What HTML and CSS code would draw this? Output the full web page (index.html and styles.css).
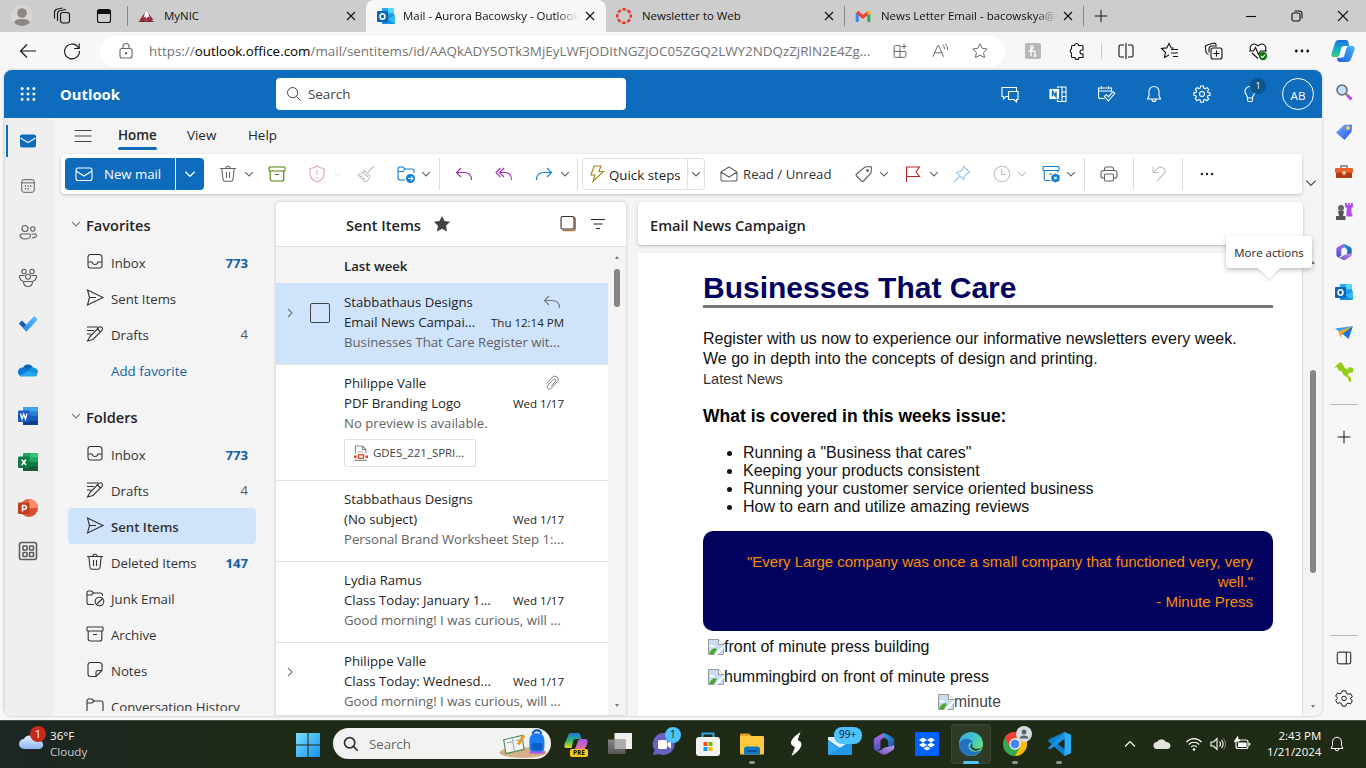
FILE: index.html
```html
<!DOCTYPE html>
<html lang="en">
<head>
<meta charset="utf-8">
<title>Mail - Aurora Bacowsky - Outlook</title>
<link rel="stylesheet" href="styles.css">
</head>
<body>
<svg class="defs" width="0" height="0">
<defs>
<linearGradient id="gBlue" x1="0" y1="0" x2="1" y2="1"><stop offset="0" stop-color="#7be0ff"/><stop offset="1" stop-color="#1490e8"/></linearGradient>
<linearGradient id="gCop1" x1="0" y1="0" x2="0" y2="1"><stop offset="0" stop-color="#1a74d8"/><stop offset=".6" stop-color="#12b5c0"/><stop offset="1" stop-color="#4bc878"/></linearGradient>
<linearGradient id="gCop2" x1="0" y1="1" x2="1" y2="0"><stop offset="0" stop-color="#1d5fe0"/><stop offset="1" stop-color="#45b6f2"/></linearGradient>
<linearGradient id="gPre1" x1="0" y1="0" x2="0" y2="1"><stop offset="0" stop-color="#1a7bdc"/><stop offset=".5" stop-color="#2bb673"/><stop offset="1" stop-color="#f2d320"/></linearGradient>
<linearGradient id="gPre2" x1="0" y1="0" x2="0" y2="1"><stop offset="0" stop-color="#a35bf0"/><stop offset="1" stop-color="#f5708c"/></linearGradient>
<linearGradient id="gM1" x1="0" y1="0" x2="0" y2="1"><stop offset="0" stop-color="#b06be0"/><stop offset="1" stop-color="#4a4ec8"/></linearGradient>
<linearGradient id="gM2" x1="0" y1="0" x2="1" y2="1"><stop offset="0" stop-color="#2f9fe6"/><stop offset="1" stop-color="#1c4fa4"/></linearGradient>
<linearGradient id="gM3" x1="0" y1="1" x2="1" y2="0"><stop offset="0" stop-color="#6c4fc0"/><stop offset="1" stop-color="#c49be8"/></linearGradient>
<linearGradient id="gEdge" x1="0" y1="0" x2="1" y2=".6"><stop offset="0" stop-color="#2ba4ea"/><stop offset=".6" stop-color="#35c1c0"/><stop offset="1" stop-color="#5ee06a"/></linearGradient>
<linearGradient id="gTodo" x1="0" y1="1" x2="1" y2="0"><stop offset="0" stop-color="#2b88e0"/><stop offset="1" stop-color="#5bc4ff"/></linearGradient>
<linearGradient id="gTag" x1="0" y1="0" x2="1" y2="1"><stop offset="0" stop-color="#74b4ff"/><stop offset="1" stop-color="#2a50e8"/></linearGradient>
<linearGradient id="gGrey" x1="0" y1="0" x2="0" y2="1"><stop offset="0" stop-color="#858585"/><stop offset="1" stop-color="#555"/></linearGradient>
<linearGradient id="gCloud" x1="0" y1="0" x2="0" y2="1"><stop offset="0" stop-color="#e6effd"/><stop offset="1" stop-color="#8fb6f2"/></linearGradient>
</defs>
<symbol id="x" viewBox="0 0 20 20"><path d="M6 6l8 8M14 6l-8 8"/></symbol>
<symbol id="chev" viewBox="0 0 10 10"><path d="M1.200 3.200L5 7l3.800-3.800"/></symbol>
<symbol id="chevr" viewBox="0 0 10 10"><path d="M3 1l4 4-4 4"/></symbol>
<symbol id="plus" viewBox="0 0 20 20"><path d="M10 3v14M3 10h14"/></symbol>
<symbol id="workspaces" viewBox="0 0 20 20"><rect x="8.500" y="6.500" width="9" height="10.500" rx="2.500"/><path d="M5.500 15V8a3.500 3.500 0 0 1 3.500-3.500l5-1M2.500 12.500V6.500A3.500 3.500 0 0 1 5.500 3l5-1"/></symbol>
<symbol id="tabact" viewBox="0 0 20 20"><rect x="3.500" y="3.500" width="13" height="13" rx="2"/><path d="M4 4.500h12v3H4z" fill="currentColor"/></symbol>
<symbol id="outlook" viewBox="0 0 18 18"><path d="M5 1h12v9H5z" fill="#28a8ea" stroke="none"/><path d="M11 1h6v5h-6z" fill="#50d9ff" stroke="none"/><path d="M4 9l14-1v9H5z" fill="#1490df" stroke="none"/><path d="M10 12l8-4v9z" fill="#35b8f1" stroke="none"/><rect x="0" y="4" width="11" height="11" rx="1" fill="#0a66b8" stroke="none"/><ellipse cx="5.500" cy="9.500" rx="2.400" ry="2.700" stroke="#fff" stroke-width="1.600"/></symbol>
<symbol id="mountain" viewBox="0 0 18 18"><path d="M2.500 13L9.500 3.500l7 9.500z" fill="#9a3040" stroke="none"/><path d="M8 5.500l1.500-2L11.500 6.500l1 4-1.500-1-1.500 2-1.500-2-1.500 1.500z" fill="#fff" stroke="none"/><path d="M1 15l3.500-2.500 4.500 1 4-1 4.500 2.500z" fill="#8d2332" stroke="none"/></symbol>
<symbol id="back" viewBox="0 0 20 20"><path d="M18 10H2.500M9 3.500L2.500 10 9 16.500"/></symbol>
<symbol id="reload" viewBox="0 0 20 20"><path d="M16.800 7.500A7.400 7.400 0 1 0 17.400 10M17.200 2.500v5h-5"/></symbol>
<symbol id="lock" viewBox="0 0 20 20"><rect x="4" y="7.500" width="12" height="9.500" rx="2"/><path d="M7 7.500V5.500a3 3 0 0 1 6 0v2"/><circle cx="10" cy="12.200" r=".7" fill="currentColor"/></symbol>
<symbol id="apps" viewBox="0 0 20 20"><path d="M10 4H5a1.500 1.500 0 0 0-1.500 1.500V16A1 1 0 0 0 4.500 17H15a1.500 1.500 0 0 0 1.500-1.500V11M10 4v13M3.500 10.500h13M14.500 2v6M11.500 5h6"/></symbol>
<symbol id="star" viewBox="0 0 20 20"><path d="M10 2l2.500 5 5.500.8-4 3.900 1 5.500-5-2.600-5 2.600 1-5.500-4-3.900 5.500-.8z"/></symbol>
<symbol id="puzzle" viewBox="0 0 20 20"><path d="M7.500 4.500a2 2 0 0 1 4 0H15a1 1 0 0 1 1 1V9h-1a2 2 0 0 0 0 4h1v3.500h-4a2 2 0 0 1-4 0H5.500a1 1 0 0 1-1-1V12a2.200 2.200 0 0 1 0-4V5.500a1 1 0 0 1 1-1z"/></symbol>
<symbol id="split" viewBox="0 0 20 20"><path d="M8 4H4.500A1.500 1.500 0 0 0 3 5.500v9A1.500 1.500 0 0 0 4.500 16H8M12 4h3.500A1.500 1.500 0 0 1 17 5.500v9a1.500 1.500 0 0 1-1.500 1.500H12M10 2v16"/></symbol>
<symbol id="starlist" viewBox="0 0 20 20"><path d="M9 14l-4.500 2.500 1-5-4-4 5.300-.6L9 2.500l2.300 4.400 2.200.2M11 8.500h7M11 12h7M13 15.500h5"/></symbol>
<symbol id="collections" viewBox="0 0 20 20"><path d="M4.500 13.500C2.500 13 2.500 12.500 2 11L1.300 6.500c-.2-1.300.5-2.200 1.700-2.500l6.500-1.800c1.300-.3 2.300.3 2.700 1.800"/><path d="M5 11.500V8a3 3 0 0 1 3-3h5"/><rect x="7" y="7" width="11" height="11" rx="2"/><path d="M12.500 9.500v6M9.500 12.500h6"/></symbol>
<symbol id="heart" viewBox="0 0 20 20"><path d="M2.800 9.500C.5 5 5.500.5 10 4.800c4.500-4.300 9.500.2 7.200 4.700M4 12l6 5.500M1 10h4.500L7.500 6.500l3 7 2-3.500H19"/><circle cx="15" cy="15" r="4.200" fill="#107c10" stroke="none"/><path d="M13 15l1.500 1.500 2.700-2.900" stroke="#fff"/></symbol>
<symbol id="dots" viewBox="0 0 20 20"><g fill="currentColor" stroke="none"><circle cx="4.300" cy="10" r="1.400"/><circle cx="10" cy="10" r="1.400"/><circle cx="15.700" cy="10" r="1.400"/></g></symbol>
<symbol id="copilot" viewBox="0 0 24 24"><g stroke="none"><path d="M8 1h7c2 0 2 1 2.500 3l.8 3H13c-2 0-2.500 1-3 3l-1.500 6C8 18 7 18 5 18H3c-3 0-3-2-2-5L4 4c.7-2 1.500-3 4-3z" fill="url(#gCop1)"/><path d="M16 23H9c-2 0-2.500-1-3-4l5-.5c1.500 0 2-.8 2.500-2.500l1.700-6c.6-2 1.500-3 3.300-3H21c3 0 3 2 2 5l-3 8c-.8 2-1.700 3-4 3z" fill="url(#gCop2)"/></g></symbol>
<symbol id="waffle" viewBox="0 0 20 20"><g fill="currentColor" stroke="none"><rect x="2" y="2.500" width="3" height="3" rx="1"/><rect x="8.500" y="2.500" width="3" height="3" rx="1"/><rect x="15" y="2.500" width="3" height="3" rx="1"/><rect x="2" y="8.500" width="3" height="3" rx="1"/><rect x="8.500" y="8.500" width="3" height="3" rx="1"/><rect x="15" y="8.500" width="3" height="3" rx="1"/><rect x="2" y="14.500" width="3" height="3" rx="1"/><rect x="8.500" y="14.500" width="3" height="3" rx="1"/><rect x="15" y="14.500" width="3" height="3" rx="1"/></g></symbol>
<symbol id="search" viewBox="0 0 20 20"><circle cx="8.500" cy="8.500" r="5.700"/><path d="M12.700 12.700L17.500 17.500"/></symbol>
<symbol id="chat" viewBox="0 0 20 20"><path d="M8 12.500H6l-2.500 2.500v-2.500H2v-9h14.500v3.500"/><path d="M8.500 7.500H18v8h-1.500V18L14 15.500H8.500z"/></symbol>
<symbol id="onenote" viewBox="0 0 20 20"><path d="M9.500 4V3h8.500v14.500H9.500v-2M14 3v14.500M14 8h4M14 12.500h4"/><rect x="2" y="5.500" width="8.500" height="9" fill="currentColor"/><path d="M4.500 12.500v-5l3.500 5v-5" stroke="#0f6cbd" stroke-width="1.500"/></symbol>
<symbol id="calcheck" viewBox="0 0 20 20"><path d="M8.500 14.500H4.500a2 2 0 0 1-2-2V4h13v4M2.500 7h13M5.500 2v3M12.500 2v3"/><path d="M8.500 12.500l1.800-1.800 2.200 2 4.500-5 1.800 1.700-6.500 7.600z"/></symbol>
<symbol id="bell" viewBox="0 0 20 20"><path d="M10 2.500a5 5 0 0 0-5 5v4L3.500 15h13L15 11.500v-4a5 5 0 0 0-5-5zM8 15.500a2 2 0 0 0 4 0"/></symbol>
<symbol id="gear" viewBox="0 0 20 20"><path d="M8.600 2h2.800l.4 2.200 1.300.6L15 3.600 16.800 5.500l-1.300 1.800.5 1.300 2 .3v2.500l-2 .4-.6 1.300 1.300 1.800-1.900 1.800-1.700-1.200-1.400.5-.3 2.300H8.600l-.4-2.200-1.400-.6L5 16.700 3.200 14.800l1.200-1.700-.5-1.400-2-.4V8.800l2.100-.4.500-1.300L3.300 5.300l1.900-1.800 1.700 1.200 1.300-.5z"/><circle cx="10" cy="10" r="2.500"/></symbol>
<symbol id="bulb" viewBox="0 0 20 20"><path d="M10 2.500a5 5 0 0 0-5 5c0 2.500 2 3.500 2.500 6V16a1.500 1.500 0 0 0 1.500 1.500h2A1.500 1.500 0 0 0 12.500 16v-2.500c.5-2.500 2.500-3.500 2.500-6M7.500 14h5"/></symbol>
<symbol id="mailf" viewBox="0 0 20 20"><rect x="2" y="3.500" width="16" height="13" rx="2" fill="#0f6cbd" stroke="none"/><path d="M2.500 7L10 11.500 17.500 7" stroke="#efefef" stroke-width="1.300"/></symbol>
<symbol id="mail" viewBox="0 0 20 20"><rect x="2" y="4" width="16" height="12.500" rx="2"/><path d="M2 7l8 5 8-5"/></symbol>
<symbol id="cal" viewBox="0 0 20 20"><rect x="3" y="3" width="14" height="14" rx="2.500"/><path d="M3 6.500h14"/><path d="M6.500 10h1.400M9.300 10h1.400M12.200 10h1.400M6.500 13h1.400M9.300 13h1.400" stroke-width="1.700"/></symbol>
<symbol id="people" viewBox="0 0 20 20"><circle cx="7" cy="6.500" r="3"/><circle cx="14.800" cy="7" r="2.200"/><path d="M3 12h8.500c.8 0 1 .7 1 1.500 0 2-2.500 3.500-5.300 3.500S2 15.500 2 13.500C2 12.700 2.300 12 3 12zM13.500 12h4c.7 0 1 .5 1 1.200 0 1.800-2 2.800-4.500 2.500"/></symbol>
<symbol id="group" viewBox="0 0 20 20"><circle cx="6" cy="3.500" r="2.200"/><circle cx="14" cy="3.500" r="2.200"/><circle cx="10" cy="8.800" r="2.500"/><path d="M5.500 13.500h9c0 3-1.500 5-4.500 5s-4.500-2-4.500-5zM6.500 7.500H1.500c0 3 .5 5 3.500 5.500M13.500 7.500h5c0 3-.5 5-3.500 5.500"/></symbol>
<symbol id="todo" viewBox="0 0 20 20"><g stroke="none"><path d="M.8 9.500L4 6.500l5 5-3 3.300z" fill="#185abd"/><path d="M5 14L15.500 2.800c.5-.6 1-.5 1.500 0l2 2c.6.6.5 1 0 1.600L9 17c-.5.500-1 .5-1.500 0z" fill="url(#gTodo)"/></g></symbol>
<symbol id="onedrive" viewBox="0 0 20 20"><g stroke="none"><path d="M5 8a5.500 5.500 0 0 1 10-.5l-6 4z" fill="#0364b8"/><path d="M5 7.500c2-.5 4 .5 8 4l-9 5A4.500 4.500 0 0 1 5 7.500z" fill="#0f78d4"/><path d="M14.500 7.500c3 0 5.500 2 5.500 4.500l-2 4-8-5c1-2 2-3.500 4.500-3.500z" fill="#1490df"/><path d="M10 11l9.500 3.500c-.5 1.200-1.500 2-3 2H4.500c-1.300 0-2.200-.4-3-1z" fill="#28a8ea"/></g></symbol>
<symbol id="word" viewBox="0 0 20 20"><g stroke="none"><rect x="5" y="1" width="15" height="18" rx="1" fill="#2b7cd3"/><path d="M5 1h15v4.500H5z" fill="#41a5ee"/><path d="M5 10h15v4.500H5z" fill="#185abd"/><path d="M5 14.500h15V19H5z" fill="#103f91"/><rect x="0" y="4.500" width="11.500" height="11.500" rx="1" fill="#185abd"/></g><path d="M2.500 7.500l1.500 5.500 1.700-5L7.500 13 9 7.500" stroke="#fff" stroke-width="1.300"/></symbol>
<symbol id="excel" viewBox="0 0 20 20"><g stroke="none"><rect x="5" y="1" width="15" height="18" rx="1" fill="#21a366"/><path d="M12 1h8v4.500h-8z" fill="#33c481"/><path d="M5 10h15v9H5z" fill="#185c37"/><path d="M12 10h8v4.500h-8z" fill="#107c41"/><rect x="0" y="4.500" width="11.500" height="11.500" rx="1" fill="#107c41"/></g><path d="M3.700 7.500L8 13M8 7.500L3.700 13" stroke="#fff" stroke-width="1.500"/></symbol>
<symbol id="ppt" viewBox="0 0 20 20"><g stroke="none"><circle cx="11" cy="10" r="9" fill="#d35230"/><path d="M11 1a9 9 0 0 1 9 9h-9z" fill="#ff8f6b"/><path d="M11 1a9 9 0 0 0-9 9h9z" fill="#ed6c47"/><rect x="0" y="4.500" width="11.500" height="11.500" rx="1" fill="#c43e1c"/></g><path d="M4.500 13.500v-6H6.500a1.800 1.800 0 0 1 0 3.800h-2" stroke="#fff" stroke-width="1.500"/></symbol>
<symbol id="moreapps" viewBox="0 0 20 20"><rect x="1.500" y="1.500" width="17" height="17" rx="2"/><rect x="5" y="5" width="4" height="4" rx=".5"/><rect x="11.500" y="5" width="4" height="4" rx=".5"/><rect x="5" y="11.500" width="4" height="4" rx=".5"/><rect x="11.500" y="11.500" width="4" height="4" rx=".5"/></symbol>
<symbol id="trash" viewBox="0 0 20 20"><path d="M2 4.500h16M7.800 4.500a2.200 2.200 0 0 1 4.400 0M3.800 4.500L5 15.500a2 2 0 0 0 2 1.800h6a2 2 0 0 0 2-1.800l1.200-11M8.500 8v6M11.500 8v6"/></symbol>
<symbol id="archive" viewBox="0 0 20 20"><rect x="2" y="3" width="16" height="4" rx=".8"/><path d="M3.200 7v8a2 2 0 0 0 2 2h9.600a2 2 0 0 0 2-2V7M8 10.500h4"/></symbol>
<symbol id="shield" viewBox="0 0 20 20"><path d="M10 2c2 1.500 4 2.300 7 2.500V10c0 4-3 6.500-7 8-4-1.500-7-4-7-8V4.500C6 4.300 8 3.500 10 2zM10 6v5M10 13v1.300"/></symbol>
<symbol id="broom" viewBox="0 0 20 20"><path d="M18 2l-6 6M8.500 6.500l5.200 5.200c-.2 3-1.700 5.300-4.700 6L2 10.500c2.500-.5 5-1.500 6.500-4zM7 8.200l4.800 4.800M4.500 13.200l2-1.700M7 15.700l2-2"/></symbol>
<symbol id="movefold" viewBox="0 0 20 20"><path d="M9 16H4a2 2 0 0 1-2-2V4.500A1.500 1.500 0 0 1 3.500 3h3.500l2 2h7a2 2 0 0 1 2 2v2M2 7.500h5L9 5"/><circle cx="14.500" cy="14.500" r="4.500" fill="#0f7fd8" stroke="none"/><path d="M12 14.500h5M15 12.500l2 2-2 2" stroke="#fff"/></symbol>
<symbol id="reply" viewBox="0 0 20 20"><path d="M7 4L2.500 8.500 7 13M2.500 8.500H10c5 0 7.500 2.500 7.500 7.500"/></symbol>
<symbol id="replyall" viewBox="0 0 20 20"><path d="M10 4L5.500 8.500 10 13M6.500 4L2 8.500 6.500 13M5.500 8.500H11c4.500 0 6.500 2.500 6.500 7.500"/></symbol>
<symbol id="bolt" viewBox="0 0 20 20"><path d="M7 2h7l-2 5.500h4.500L6 17.500l2-6.500H4z"/></symbol>
<symbol id="openmail" viewBox="0 0 20 20"><path d="M2 8l8-5 8 5v7a2 2 0 0 1-2 2H4a2 2 0 0 1-2-2zM2 8l8 5 8-5"/></symbol>
<symbol id="tag" viewBox="0 0 20 20"><path d="M11 3l5.500-.5c.6 0 1 .4 1 1L17 9l-7.500 8c-.6.600-1.400.600-2 0l-5-5c-.6-.6-.6-1.400 0-2z"/><circle cx="13.500" cy="6.500" r=".9"/></symbol>
<symbol id="flag" viewBox="0 0 20 20"><path d="M3.500 18V3H16.500l-3.500 4.800 3.500 4.700h-13"/></symbol>
<symbol id="pin" viewBox="0 0 20 20"><path d="M12 2.500l5.500 5.500-4.500 2.500-1.500 5-7-7 5-1.500zM7.500 12.500L2.500 17.500"/></symbol>
<symbol id="clock" viewBox="0 0 20 20"><circle cx="10" cy="10" r="7.800"/><path d="M9.500 5v5.500h4"/></symbol>
<symbol id="archgear" viewBox="0 0 20 20"><rect x="2" y="2.500" width="16" height="4" rx=".8"/><path d="M3.200 6.500v8a2 2 0 0 0 2 2H9M16.800 6.500v2M8 10h3"/><circle cx="14.500" cy="14" r="3" stroke-width="2.200"/><path d="M14.500 9.500v9M10.500 11.800l8 4.500M10.500 16.300l8-4.500" stroke-width="1.400"/><circle cx="14.500" cy="14" r="1.300" fill="#fff" stroke="none"/></symbol>
<symbol id="print" viewBox="0 0 20 20"><path d="M5.500 14H4a2 2 0 0 1-2-2V8.500a2 2 0 0 1 2-2h12a2 2 0 0 1 2 2V12a2 2 0 0 1-2 2h-1.500M5.500 6.500V5a2 2 0 0 1 2-2h5a2 2 0 0 1 2 2v1.500"/><rect x="5.500" y="10" width="9" height="7" rx="1.500"/></symbol>
<symbol id="undo" viewBox="0 0 20 20"><path d="M4 2.500v6h6M4 8.500l4.500-4c4-3.500 10 1 6.500 5.500L8 17"/></symbol>
<symbol id="inbox" viewBox="0 0 20 20"><rect x="3" y="2.500" width="14" height="13.500" rx="2.500"/><path d="M3 10h4c.3 1.500 1.300 2.500 3 2.500s2.700-1 3-2.500h4"/></symbol>
<symbol id="send" viewBox="0 0 20 20"><path d="M2.500 2L18 9.500 2.500 17l2-7.500zM4.500 9.500H11"/></symbol>
<symbol id="draft" viewBox="0 0 20 20"><path d="M2 3h11M2 6.500h7M2 10h4M5 12.500L14 3.300c2.300-1.500 4.500 1 3 3L8 15.500l-5.500 1.500zM12.500 5l3 3"/></symbol>
<symbol id="junk" viewBox="0 0 20 20"><path d="M9 16.500H4a2 2 0 0 1-2-2V4.500A1.500 1.500 0 0 1 3.500 3h3l2 2h7a2 2 0 0 1 2 2v1M2 7h4.500l2-2"/><circle cx="14.500" cy="13.500" r="4.300"/><path d="M11.500 16.500l6-6"/></symbol>
<symbol id="note" viewBox="0 0 20 20"><path d="M5.500 2.500h9A2.500 2.500 0 0 1 17 5v5.500l-6 6H5.500A2.500 2.500 0 0 1 3 14V5a2.500 2.500 0 0 1 2.500-2.500zM17 10.500h-4a2 2 0 0 0-2 2v4"/></symbol>
<symbol id="folder" viewBox="0 0 20 20"><path d="M2 15V5a2 2 0 0 1 2-2h3l2 2h7a2 2 0 0 1 2 2v8a2 2 0 0 1-2 2H4a2 2 0 0 1-2-2zM2 7h5l2-2"/></symbol>
<symbol id="clip" viewBox="0 0 20 20"><path d="M4 10.500l6.500-7c3-3 8.500 1 5.500 5l-7 7.500c-2.500 2-5.500-1-3.500-3.500l6-6.500c1.500-1.300 3.500.5 2.200 2.200L9 13.500"/></symbol>
<symbol id="filter" viewBox="0 0 20 20"><path d="M3 5.500h14M5.500 10h9M8 14.500h4"/></symbol>
<symbol id="m365" viewBox="0 0 20 20"><g stroke="none"><path d="M9 1L3 4.500C2 5 1.500 6 1.500 7v6c0 1.500 1 2.500 2.500 3l3-2V8c0-1.500 1-2 2-2.500l3-2C11 2 10 1 9 1z" fill="url(#gM1)"/><path d="M9.500 1c2 0 6 2.500 7.500 3.500 1 .6 1.500 1.500 1.500 2.500v6l-5 1V8c0-1.500-3-3-4-4z" fill="url(#gM2)"/><path d="M18.500 11v2c0 1-.5 1.800-1.300 2.300l-5 3c-1.400.800-2.800.8-4.200 0L4 16c3 0 4-1.500 6-2.800 1.500-1 4-.5 8.500-2.200z" fill="url(#gM3)"/></g></symbol>
<symbol id="brk" viewBox="0 0 16 16"><path d="M.5.500h10l5 5v10H.5z" fill="#c9dcf5" stroke="#9a9a9a"/><path d="M10.500.5v5h5" fill="#fff" stroke="#9a9a9a"/><path d="M2 7.500c0-1.500 2-2 2.700-.8 1.300-.5 2.500.3 2.300 1.300H2z" fill="#fff" stroke="none"/><path d="M1 15c2-5 5-7 8-5l-3 5z" fill="#4ba82e" stroke="none"/><path d="M6 16L16 6v3l-7 7z" fill="#fff" stroke="none"/></symbol>
</svg>

<header class="tabs">
  <span class="slot c44"><svg class="avatar" viewBox="0 0 22 22"><circle cx="11" cy="11" r="11" fill="#d9d6d1"/><circle cx="11" cy="8" r="4.800" fill="#8b8784"/><path d="M3 17.500c1.500-3 4-3.500 8-3.500s6.500.5 8 3.500a11 11 0 0 1-16 0z" fill="#8b8784"/></svg></span>
  <span class="slot c36"><svg class="i s20"><use href="#workspaces"/></svg></span>
  <span class="slot c48"><svg class="i s20"><use href="#tabact"/></svg></span>
  <span class="tabline"></span>
  <div class="tab t1"><svg class="i s18"><use href="#mountain"/></svg><span class="title">MyNIC</span><svg class="i s20"><use href="#x"/></svg></div>
  <div class="tab t2"><svg class="i s18"><use href="#outlook"/></svg><span class="title fade">Mail - Aurora Bacowsky - Outlook</span><svg class="i s20"><use href="#x"/></svg></div>
  <div class="tab t3"><svg class="i s18" viewBox="0 0 18 18"><circle cx="9" cy="9" r="6.700" stroke="#e23b30" stroke-width="2.500" stroke-dasharray="3.600 1.660" stroke-dashoffset="1.800"/></svg><span class="title">Newsletter to Web</span><svg class="i s20"><use href="#x"/></svg></div>
  <span class="tabline"></span>
  <div class="tab t4"><svg class="i s18" viewBox="0 0 18 18"><path d="M3.200 15V6" stroke="#4285f4" stroke-width="3"/><path d="M14.800 15V6" stroke="#34a853" stroke-width="3"/><path d="M3 5l6 5 6-5" stroke="#ea4335" stroke-width="3"/><path d="M14.800 7.500V4" stroke="#fbbc04" stroke-width="3"/></svg><span class="title fade">News Letter Email - bacowskya@</span><svg class="i s20"><use href="#x"/></svg></div>
  <span class="tabline"></span>
  <span class="slot c36"><svg class="i s18"><use href="#plus"/></svg></span>
  <div class="winctl">
    <span><svg class="i s12" viewBox="0 0 12 12"><path d="M1 6.500h10"/></svg></span>
    <span><svg class="i s12" viewBox="0 0 12 12"><rect x="1" y="3" width="8" height="8" rx="1.500"/><path d="M3.500 1h5A2.500 2.500 0 0 1 11 3.500v5"/></svg></span>
    <span><svg class="i s12" viewBox="0 0 12 12"><path d="M1 1l10 10M11 1L1 11"/></svg></span>
  </div>
</header>

<div class="toolbar">
  <span class="slot c56"><svg class="i s20"><use href="#back"/></svg></span>
  <span class="slot c32"><svg class="i s20"><use href="#reload"/></svg></span>
  <div class="address">
    <svg class="i s20 grey"><use href="#lock"/></svg>
    <span class="url">https://<b>outlook.office.com</b>/mail/sentitems/id/AAQkADY5OTk3MjEyLWFjODItNGZjOC05ZGQ2LWY2NDQzZjRlN2E4Zg...</span>
    <span class="addricons"><svg class="i s18"><use href="#apps"/></svg><svg class="i s18" viewBox="0 0 20 20"><path d="M2 16.500L7.500 4h1L14 16.500M4 12h8M13 3a6 6 0 0 1 2 5M16 2a9 9 0 0 1 2.500 7"/></svg><svg class="i s18"><use href="#star"/></svg></span>
  </div>
  <div class="exts">
    <span class="slot c44"><span class="honey"><svg class="i s16" viewBox="0 0 16 16"><path d="M6 2.500v10.500M3.500 8.500C5.500 7.500 8 6 8 4.200S6 2 6 4M6 9c4-3 5 0 3.500 4.200l2-.7" stroke="#fff" stroke-width="1.300"/></svg></span></span>
    <span class="slot c44"><svg class="i s20"><use href="#puzzle"/></svg></span>
    <span class="extline"></span>
    <span class="slot c46"><svg class="i s20"><use href="#split"/></svg></span>
    <span class="slot c44"><svg class="i s20"><use href="#starlist"/></svg></span>
    <span class="slot c44"><svg class="i s20"><use href="#collections"/></svg></span>
    <span class="slot c44"><svg class="i s20"><use href="#heart"/></svg></span>
    <span class="slot c44"><svg class="i s20"><use href="#dots"/></svg></span>
    <span class="slot c42"><svg class="i s24"><use href="#copilot"/></svg></span>
  </div>
</div>

<div class="middle">
<div class="app">
  <div class="suite">
    <span class="slot c48"><svg class="i s18"><use href="#waffle"/></svg></span>
    <span class="brand">Outlook</span>
    <div class="suitesearch"><svg class="i s18"><use href="#search"/></svg><span>Search</span></div>
    <div class="suiteicons">
      <span><svg class="i s20"><use href="#chat"/></svg></span>
      <span><svg class="i s20"><use href="#onenote"/></svg></span>
      <span><svg class="i s20"><use href="#calcheck"/></svg></span>
      <span><svg class="i s20"><use href="#bell"/></svg></span>
      <span><svg class="i s20"><use href="#gear"/></svg></span>
      <span class="bulbslot"><svg class="i s20"><use href="#bulb"/></svg><em class="tip">1</em></span>
      <span><em class="initials">AB</em></span>
    </div>
  </div>
  <div class="appbody">
    <nav class="rail">
      <span class="on"><svg class="i s20"><use href="#mailf"/></svg></span>
      <span><svg class="i s18"><use href="#cal"/></svg></span>
      <span><svg class="i s20"><use href="#people"/></svg></span>
      <span><svg class="i s20"><use href="#group"/></svg></span>
      <span><svg class="i s20"><use href="#todo"/></svg></span>
      <span><svg class="i s20"><use href="#onedrive"/></svg></span>
      <span><svg class="i s20"><use href="#word"/></svg></span>
      <span><svg class="i s20"><use href="#excel"/></svg></span>
      <span><svg class="i s20"><use href="#ppt"/></svg></span>
      <span class="last"><svg class="i s20 bold"><use href="#moreapps"/></svg></span>
    </nav>
    <div class="content">
      <div class="menus"><svg class="i s18 burger" viewBox="0 0 18 18"><path d="M.5 3.500h17M.5 9h17M.5 14.500h17"/></svg><span class="m1">Home</span><span class="m2">View</span><span class="m3">Help</span></div>
      <div class="ribbonrow">
        <div class="ribbon">
          <div class="newmail"><svg class="i s20"><use href="#mail"/></svg><span>New mail</span></div>
          <div class="newdrop"><svg class="i s12"><use href="#chev"/></svg></div>
          <svg class="i s20 g14"><use href="#trash"/></svg><svg class="i s10 g6"><use href="#chev"/></svg>
          <svg class="i s20 g13 green"><use href="#archive"/></svg>
          <svg class="i s20 g20 pink"><use href="#shield"/></svg><svg class="i s10 g6 faint"><use href="#chev"/></svg>
          <svg class="i s20 g13 off"><use href="#broom"/></svg>
          <svg class="i s20 g20 blue"><use href="#movefold"/></svg><svg class="i s10 g5"><use href="#chev"/></svg>
          <i class="div g8"></i>
          <svg class="i s20 g14 purple"><use href="#reply"/></svg>
          <svg class="i s20 g20 purple"><use href="#replyall"/></svg>
          <svg class="i s20 g20 blue flip"><use href="#reply"/></svg><svg class="i s10 g6"><use href="#chev"/></svg>
          <i class="div g7"></i>
          <div class="quick g4"><svg class="i s20 gold"><use href="#bolt"/></svg><span>Quick steps</span><b><svg class="i s10"><use href="#chev"/></svg></b></div>
          <svg class="i s20 g14"><use href="#openmail"/></svg><span class="ru g4">Read / Unread</span>
          <svg class="i s20 g21"><use href="#tag"/></svg><svg class="i s10 g5"><use href="#chev"/></svg>
          <svg class="i s20 g14 red"><use href="#flag"/></svg><svg class="i s10 g6"><use href="#chev"/></svg>
          <svg class="i s20 g13 sky"><use href="#pin"/></svg>
          <svg class="i s20 g20 off"><use href="#clock"/></svg><svg class="i s10 g5 off"><use href="#chev"/></svg>
          <svg class="i s20 g14 blue"><use href="#archgear"/></svg><svg class="i s10 g5"><use href="#chev"/></svg>
          <i class="div g8"></i>
          <svg class="i s20 g14"><use href="#print"/></svg>
          <i class="div g14"></i>
          <svg class="i s20 g15 off"><use href="#undo"/></svg>
          <i class="div g13"></i>
          <svg class="i s18 g15 dark"><use href="#dots"/></svg>
        </div>
        <svg class="i s12 collapse"><use href="#chev"/></svg>
      </div>
      <div class="panes">
        <div class="folders">
          <div class="fhead"><svg class="i s10"><use href="#chev"/></svg><span>Favorites</span></div>
          <div class="f"><svg class="i s20"><use href="#inbox"/></svg><span>Inbox</span><b>773</b></div>
          <div class="f"><svg class="i s20"><use href="#send"/></svg><span>Sent Items</span></div>
          <div class="f"><svg class="i s20"><use href="#draft"/></svg><span>Drafts</span><i>4</i></div>
          <div class="f add"><span>Add favorite</span></div>
          <div class="fhead second"><svg class="i s10"><use href="#chev"/></svg><span>Folders</span></div>
          <div class="f"><svg class="i s20"><use href="#inbox"/></svg><span>Inbox</span><b>773</b></div>
          <div class="f"><svg class="i s20"><use href="#draft"/></svg><span>Drafts</span><i>4</i></div>
          <div class="f sel"><svg class="i s20"><use href="#send"/></svg><span>Sent Items</span></div>
          <div class="f"><svg class="i s20"><use href="#trash"/></svg><span>Deleted Items</span><b>147</b></div>
          <div class="f"><svg class="i s20"><use href="#junk"/></svg><span>Junk Email</span></div>
          <div class="f"><svg class="i s20"><use href="#archive"/></svg><span>Archive</span></div>
          <div class="f"><svg class="i s20"><use href="#note"/></svg><span>Notes</span></div>
          <div class="f"><svg class="i s20"><use href="#folder"/></svg><span class="conv">Conversation History</span></div>
        </div>
        <div class="list">
          <div class="listhead"><span class="lt">Sent Items</span><svg class="s18 solidstar" viewBox="0 0 20 20"><path d="M10 1l2.800 5.700 6.200.9-4.500 4.400 1.100 6.200-5.600-2.900-5.600 2.900 1.100-6.200L1 7.600l6.200-.9z"/></svg><svg class="i s18 sel-icon" viewBox="0 0 18 18"><path d="M15 2.500l1.200 1V13a2.500 2.500 0 0 1-2.500 2.500H5L3.500 14.500" stroke="#b87340" stroke-width="1.500"/><rect x="2" y="1.500" width="13" height="12.500" rx="1.500" stroke="#333"/></svg><svg class="i s20 dark filt"><use href="#filter"/></svg></div>
          <div class="listbody">
            <div class="msgs">
              <div class="week">Last week</div>
              <div class="msg cur">
                <svg class="i s10"><use href="#chevr"/></svg><i class="box"></i>
                <div class="mtext"><p><span>Stabbathaus Designs</span><svg class="i s20"><use href="#reply"/></svg></p><p><span>Email News Campai...</span><time>Thu 12:14 PM</time></p><p class="pre">Businesses That Care Register wit...</p></div>
              </div>
              <div class="msg tall">
                <div class="mtext"><p><span>Philippe Valle</span><svg class="i s18"><use href="#clip"/></svg></p><p><span>PDF Branding Logo</span><time>Wed 1/17</time></p><p class="pre">No preview is available.</p><div class="att"><svg class="i s16" viewBox="0 0 16 16"><path d="M2.500 8.500V1h7L13 4.500v4M9.500 1v3.500H13M2.500 14v1.500H13V14" stroke="#8a8a8a"/><path d="M4.500 7h6" stroke="#bbb"/><rect x="5.500" y="9.800" width="5" height="3.700" stroke="#d24726" stroke-width="1.300"/><path d="M1 10.500h2.500v2.500H1zM12.500 10.500H15v2.500h-2.500z" fill="#d24726" stroke="none"/></svg><span>GDES_221_SPRI...</span></div></div>
              </div>
              <div class="msg"><div class="mtext"><p><span>Stabbathaus Designs</span></p><p><span>(No subject)</span><time>Wed 1/17</time></p><p class="pre">Personal Brand Worksheet Step 1:...</p></div></div>
              <div class="msg"><div class="mtext"><p><span>Lydia Ramus</span></p><p><span>Class Today: January 1...</span><time>Wed 1/17</time></p><p class="pre">Good morning! I was curious, will ...</p></div></div>
              <div class="msg"><svg class="i s10"><use href="#chevr"/></svg><div class="mtext"><p><span>Philippe Valle</span></p><p><span>Class Today: Wednesd...</span><time>Wed 1/17</time></p><p class="pre">Good morning! I was curious, will ...</p></div></div>
            </div>
            <div class="scroll"><i class="up"></i><i class="thumb"></i><i class="down"></i></div>
          </div>
        </div>
        <div class="reading">
          <div class="subject">Email News Campaign</div>
          <div class="bodyrow">
            <article class="mailbody">
              <h1>Businesses That Care</h1>
              <p class="lead">Register with us now to experience our informative newsletters every week.<br>We go in depth into the concepts of design and printing.</p>
              <p class="latest">Latest News</p>
              <h2>What is covered in this weeks issue:</h2>
              <ul><li>Running a "Business that cares"</li><li>Keeping your products consistent</li><li>Running your customer service oriented business</li><li>How to earn and utilize amazing reviews</li></ul>
              <blockquote>"Every Large company was once a small company that functioned very, very<br>well."<br>- Minute Press</blockquote>
              <div class="alt a1"><svg class="s16"><use href="#brk"/></svg><span>front of minute press building</span></div>
              <div class="alt a2"><svg class="s16"><use href="#brk"/></svg><span>hummingbird on front of minute press</span></div>
              <div class="alt a3"><svg class="s16"><use href="#brk"/></svg><span>minute</span></div>
            </article>
            <div class="scroll rs"><i class="up"></i><i class="thumb"></i><i class="down"></i></div>
          </div>
          <div class="tooltip">More actions</div>
        </div>
      </div>
    </div>
  </div>
</div>
<aside class="edge">
  <span><svg class="i s18" viewBox="0 0 18 18"><circle cx="7" cy="7" r="5" fill="#bfe0f8" stroke="#666" stroke-width="1.500"/><path d="M11 11l2 2" stroke="#777" stroke-width="2"/><path d="M12.500 12.500l4 4" stroke="#b845e8" stroke-width="3"/></svg></span>
  <span><svg class="s18" viewBox="0 0 18 18"><path d="M9 2l7-.5c.8 0 1 .4 1 1L16.500 9l-7 8L1 9.500z" fill="url(#gTag)"/><circle cx="13" cy="5" r="2" fill="#f8d64a"/></svg></span>
  <span><svg class="s18" viewBox="0 0 18 18"><path d="M6 5V3h6v2" fill="none" stroke="#7a7a7a" stroke-width="1.500"/><rect x="0" y="5" width="18" height="5" rx="1" fill="#e8622c"/><path d="M1 9.500h16V15H1z" fill="#b83c12"/><rect x="7.500" y="8.500" width="3" height="3" fill="#f0e0d0"/></svg></span>
  <span><svg class="s18" viewBox="0 0 18 18"><circle cx="6" cy="5" r="3" fill="#666"/><path d="M3 8h6l-1 5h2.500v4H1v-4h3z" fill="#555"/><path d="M10 0h2v2h1V0h2v2h1V0h2v4l-1.500 1V10l1 2v1.500h-6V9L12 5l-2-1z" fill="#b44cf0"/></svg></span>
  <span><svg class="i s18"><use href="#m365"/></svg></span>
  <span><svg class="i s18"><use href="#outlook"/></svg></span>
  <span><svg class="s18" viewBox="0 0 18 18"><path d="M0 5.500L18 3 6 10z" fill="#36a3f5"/><path d="M6 10L18 3l-4.500 13-4-3.500z" fill="#1e74d8"/><path d="M3 8.500L18 3 7 11l-1 4z" fill="#f0a630"/></svg></span>
  <span><svg class="s20" viewBox="0 0 20 20"><path d="M0 6.500L3.500 2 7 0l4 6 2.500 1.500L15 5l4 1v2.500l1 1-3 1.500-1.500-.5-2 2.500 3.500 3v4l-2-.5-1-3.500-4.500-3-2-4-3-.5L3 5z" fill="#94cc18"/></svg></span>
  <i class="eline"></i>
  <span class="eplus"><svg class="i s18"><use href="#plus"/></svg></span>
  <i class="eline low"></i>
  <span class="epanel"><svg class="i s18" viewBox="0 0 20 20"><rect x="2.500" y="3.500" width="15" height="13" rx="2"/><path d="M12.500 3.500v13"/></svg></span>
  <span><svg class="i s18" viewBox="0 0 20 20"><path d="M8 2h4l.7 2.800 1.800 1L17.300 5l2 3.500-2 2v1l2 1.500-2 3.500-2.800-.8-1.800 1L12 19H8l-.7-2.800-1.800-1-2.800.8-2-3.500 2-2v-1L.7 8l2-3.500 2.800.8 1.800-1z"/><circle cx="10" cy="10.500" r="2.500"/></svg></span>
</aside>
</div>

<footer class="taskbar">
  <div class="weather"><svg class="s28" viewBox="0 0 28 28"><path d="M6 22a5 5 0 0 1 0-10c1-4 8-5 10-1 3-1 6 0 7 3 4 3 2 8-2 8z" fill="url(#gCloud)"/></svg><em>1</em><p>36°F<br><small>Cloudy</small></p></div>
  <span class="slot start"><svg class="s24" viewBox="0 0 24 24" fill="url(#gBlue)"><path d="M0 0h11.500v11.500H0zM12.500 0H24v11.500H12.500zM0 12.500h11.500V24H0zM12.500 12.500H24V24H12.500z"/></svg></span>
  <div class="tsearch"><svg class="i s18"><use href="#search"/></svg><span>Search</span><svg class="art" viewBox="0 0 44 28"><ellipse cx="22" cy="22" rx="22" ry="5" fill="#d3b089"/><path d="M4 10l17-4 2 13-17 4z" fill="#f4f4f0" stroke="#3e8f5a"/><path d="M12 8l2 13M7 13l5-1M15 11l5-1" stroke="#9ab" fill="none"/><path d="M16 14L22 5l2 1.500-5 8.500z" fill="#f19a2c"/><rect x="28" y="4" width="14" height="19" rx="6" fill="#1c7df0"/><rect x="30" y="13" width="10" height="7" rx="2" fill="#0c5ecb"/><path d="M31 5c0-5 8-5 8 0" stroke="#0c5ecb" fill="none" stroke-width="2"/><path d="M28 22h14" stroke="#b45ce8" stroke-width="2"/></svg></div>
  <div class="pins">
    <span><svg class="s24" viewBox="0 0 24 24"><path d="M7 1h7c2 0 2 1 2.500 3l.8 3H12c-2 0-2.500 1-3 3l-1.500 6H3c-3 0-3-2-2-5L4 4c.7-2 1-3 3-3z" fill="url(#gPre1)"/><path d="M7 18l4-1 3-8c.5-1 1.500-2 3-2h4c3 0 3 2 2 5l-3 7z" fill="url(#gPre2)"/></svg><em class="pre-badge">PRE</em></span>
    <span><svg class="s24" viewBox="0 0 24 24"><path d="M6.500 1H24v16H6.500z" fill="#eee"/><path d="M0 7.500h17.500V22H0z" fill="url(#gGrey)"/><path d="M6.500 7.500h11V17h-11z" fill="#ababab"/></svg></span>
    <span><svg class="s24" viewBox="0 0 24 24"><path d="M12 1a11 11 0 1 1-5 21l-6 1 1.500-5A11 11 0 0 1 12 1z" fill="#6762c4"/><rect x="6" y="8" width="9" height="9" rx="1.500" fill="#fff"/><path d="M15.500 11l3.500-2.500v8L15.500 14z" fill="#fff"/></svg><em class="count">1</em></span>
    <span><svg class="s24" viewBox="0 0 24 24"><path d="M6.500 6V1.500h11V6" fill="none" stroke="#28a8ea" stroke-width="2"/><rect x="0" y="5" width="24" height="19" rx="3" fill="#f2f2f2"/><path d="M7.500 10h4v4h-4z" fill="#f25022"/><path d="M12.500 10h4v4h-4z" fill="#7fba00"/><path d="M7.500 15h4v4h-4z" fill="#00a4ef"/><path d="M12.500 15h4v4h-4z" fill="#ffb900"/></svg></span>
    <span class="run"><svg class="s24" viewBox="0 0 24 24"><path d="M0 3c0-1 .5-1.500 1.500-1.500H9L11.500 4H0z" fill="#e5a320"/><path d="M0 4h22.500c1 0 1.500.5 1.500 1.500V21c0 1-.5 1.500-1.500 1.500h-21C.5 22.500 0 22 0 21z" fill="#ffcb3d"/><path d="M4 22.500V17c0-1.500 1-2.500 2.500-2.500h11c1.500 0 2.500 1 2.500 2.500v5.500z" fill="#1478c8"/><path d="M7 18h10v2H7z" fill="#0b5394"/></svg></span>
    <span><svg class="s24" viewBox="0 0 24 24"><path d="M16.500 0C12 3 7 7 7 11c0 1.500 1 2.500 3 3.500.8.500.8 1 .5 2L7.500 24c5-3 10-7.500 10-12 0-1.500-1-2.500-3-3.500-.7-.4-.8-.8-.5-1.500z" fill="#fff"/></svg></span>
    <span><svg class="s24" viewBox="0 0 24 24"><path d="M0 9h24v14H0z" fill="#1b86dc"/><path d="M0 8l12 8 12-8v-3H0z" fill="#dff1ff"/><path d="M0 9l12 8L0 23z" fill="#35a6f2"/><path d="M0 23l24-14v14z" fill="#2396e6"/></svg><em class="count wide">99+</em></span>
    <span><svg class="i s24"><use href="#m365"/></svg></span>
    <span><svg class="s24" viewBox="0 0 24 24"><path d="M0 0h24v24H0z" fill="#0061fe"/><path d="M8 5.500l4 2.500-4 2.500L4 8zM16 5.500L20 8l-4 2.500L12 8zM8 10.500l4 2.500-4 2.500L4 13zM16 10.500l4 2.500-4 2.500L12 13zM12 14.500l3.500 2-3.500 2-3.500-2z" fill="#fff"/></svg></span>
    <span class="run act"><svg class="s24" viewBox="0 0 24 24"><circle cx="12" cy="12" r="12" fill="url(#gEdge)"/><path d="M0 13C1 5 13 5 14 11c-5-2-6 4-3 7 3 2.500 7 2 11 0-3 5-8 6.500-13 5.500C3 22 0 18 0 13z" fill="#1465ba"/><path d="M12 16c-1.500-2 .5-3 .5-5 2 1.500-.5 3.500 2 5 3 1.500 6 1 8.500-1-1 3-8 6-11 1z" fill="#1e2a16"/></svg></span>
    <span class="run"><svg class="s24" viewBox="0 0 24 24"><circle cx="12" cy="12" r="12" fill="#34a853"/><path d="M1.600 6A12 12 0 0 1 22.400 6L12 12z" fill="#ea4335"/><path d="M12 24A12 12 0 0 0 22.400 6H12l5 9z" fill="#fbbc04"/><path d="M1.600 6L7 15l5-9h10.400A12 12 0 0 0 1.600 6z" fill="#ea4335"/><circle cx="12" cy="12" r="5.700" fill="#fff"/><circle cx="12" cy="12" r="4.500" fill="#4285f4"/></svg><svg class="who" viewBox="0 0 16 16"><circle cx="8" cy="8" r="8" fill="#d9dde1"/><circle cx="8" cy="6" r="2.500" fill="#596773"/><path d="M3.500 12.500c0-4 9-4 9 0z" fill="#596773"/></svg></span>
    <span class="run"><svg class="s24" viewBox="0 0 24 24"><path d="M17.500 0L24 3v18l-6.500 3L1 9l1.500-2z" fill="#0b7fcf"/><path d="M1 16L17.500 0v7L3 17.500z" fill="#1a92e0"/><path d="M17.500 0L24 3v18l-6.500 3z" fill="#2bacf5"/><path d="M17.500 7v10L11 12z" fill="#1f2a16"/></svg></span>
  </div>
  <div class="tray">
    <svg class="i s16 tup" viewBox="0 0 16 16"><path d="M3 10.500l5-5 5 5"/></svg>
    <svg class="s18 tcloud" viewBox="0 0 18 18"><path d="M4 14a3.500 3.500 0 0 1 0-7 5 5 0 0 1 9 0c3 0 4.500 2 4.500 4S16 14 14 14z" fill="#e2e2e2"/></svg>
    <svg class="i s18 twifi" viewBox="0 0 18 18"><path d="M1.500 7c4.500-4.500 10.500-4.500 15 0M3.800 9.500c3-3 7.400-3 10.400 0M6.200 12c1.800-1.600 3.800-1.600 5.600 0"/><circle cx="9" cy="14.500" r="1.300" fill="#fff" stroke="none"/></svg>
    <svg class="i s18 tvol" viewBox="0 0 18 18"><path d="M2 7h2.500L8 3.500v11L4.500 11H2zM10.500 6.500c1.200 1.500 1.200 3.500 0 5M12.500 5c2 2.500 2 5.500 0 8"/><path d="M14.500 3.500c2.700 3.500 2.700 7.500 0 11" stroke="#777"/></svg>
    <svg class="i s18 tbat" viewBox="0 0 18 18"><rect x="3" y="5" width="12" height="8.500" rx="2"/><path d="M5.500 8h7.500v3.500H5.500z" fill="#fff"/><path d="M16.500 8v2.500M1.500 7l3-4.500.500 3.500 2-1" stroke-width="1.500"/></svg>
    <p class="when">2:43 PM<br>1/21/2024</p>
    <svg class="i s18 tbell"><use href="#bell"/></svg>
  </div>
</footer>
</body>
</html>
```
FILE: styles.css
```css
* { box-sizing: border-box; }
body { margin: 0; width: 1366px; height: 768px; overflow: hidden; display: flex; flex-direction: column; background: #f7f7f7; font: 13.2px/20px "Open Sans", "Noto Sans", sans-serif; color: #242424; }
p, h1, h2, ul, blockquote { margin: 0; }
svg { flex: none; display: block; }
.defs { position: absolute; }
i, em { font-style: normal; }
.i { fill: none; stroke: currentColor; stroke-width: 1.1; }
.bold { stroke-width: 1.6; }
.s10 { width: 10px; height: 10px; } .s12 { width: 12px; height: 12px; } .s16 { width: 16px; height: 16px; }
.s18 { width: 18px; height: 18px; } .s20 { width: 20px; height: 20px; } .s24 { width: 24px; height: 24px; } .s28 { width: 28px; height: 28px; }
.slot { display: flex; align-items: center; justify-content: center; flex: none; }
.c32 { width: 32px; } .c36 { width: 36px; } .c42 { width: 37px; } .c44 { width: 44px; } .c46 { width: 45px; } .c48 { width: 48px; } .c56 { width: 56px; }

/* Browser tab strip */
.tabs { height: 32px; flex: none; display: flex; align-items: center; background: #cdcdcd; color: #111; font-size: 11.45px; }
.tabs .avatar { width: 22px; height: 22px; }
.tabs .c48 { width: 47px; }
.tabline { width: 1px; height: 20px; background: #888; flex: none; }
.tab { height: 32px; display: flex; align-items: center; flex: none; }
.tab .title { flex: 1; margin-left: 9px; white-space: nowrap; overflow: hidden; }
.tab .fade { -webkit-mask-image: linear-gradient(90deg, #000 88%, transparent); mask-image: linear-gradient(90deg, #000 88%, transparent); }
.t1 { width: 238px; padding: 0 5px 0 9px; }
.t2 { width: 240px; padding: 0 6px 0 11px; background: #f7f7f7; border-radius: 8px 8px 0 0; }
.t2 .title { margin-left: 8px; margin-right: 2px; }
.t3 { width: 238px; padding: 0 5px 0 9px; }
.t4 { width: 238px; padding: 0 5px 0 9px; }
.t4 .title { margin-right: 1px; }
.tabline + .c36 { width: 34px; }
.winctl { margin-left: auto; display: flex; }
.winctl span { width: 46px; display: flex; justify-content: center; }

/* Address toolbar */
.toolbar { height: 38px; flex: none; display: flex; align-items: center; background: #f7f7f7; color: #111; }
.address { width: 905px; height: 31px; margin-left: 12px; padding-left: 16px; background: #fff; border-radius: 16px; display: flex; align-items: center; }
.grey, .addricons { color: #666; }
.url { margin-left: 13px; width: 735px; font-size: 13.4px; color: #737373; white-space: nowrap; }
.url b { font-weight: 400; color: #000; }
.addricons { display: flex; gap: 22px; margin-left: 7px; }
.exts { display: flex; align-items: center; margin-left: 6px; }
.honey { width: 16px; height: 16px; background: #b8b8b8; border-radius: 2px; }
.extline { width: 1px; height: 16px; margin: 0 1px 0 2px; background: #c8c8c8; }

.middle { height: 650px; flex: none; display: flex; }
.app { width: 1318px; height: 646px; margin-left: 4px; border-radius: 8px; overflow: hidden; display: flex; flex-direction: column; box-shadow: 0 0 3px #bbb; background: #f4f4f4; }

/* Outlook suite header */
.suite { height: 48px; flex: none; display: flex; align-items: center; background: #0f6cbd; color: #fff; }
.brand { width: 220px; margin-left: 8px; font-weight: 700; font-size: 14.8px; }
.suitesearch { width: 350px; height: 32px; margin-left: -4px; padding-left: 9px; display: flex; align-items: center; gap: 5px; background: #fff; border-radius: 4px; color: #424242; font-size: 13.4px; }
.suiteicons { display: flex; margin-left: auto; }
.suiteicons > span { width: 48px; height: 48px; display: flex; align-items: center; justify-content: center; }
.bulbslot { position: relative; }
.tip { position: absolute; left: 24px; top: 8px; width: 16px; height: 16px; border-radius: 8px; background: #0f548c; font-size: 9px; line-height: 16px; text-align: center; }
.initials { width: 32px; height: 32px; border: 1px solid #fff; border-radius: 16px; font-size: 11.6px; line-height: 33px; text-align: center; }

.appbody { flex: 1; min-height: 0; display: flex; }
.rail { width: 49px; flex: none; background: #efefef; border-left: 1px solid #e0e0e0; color: #5c5c5c; display: flex; flex-direction: column; }
.rail span { height: 46px; flex: none; display: flex; align-items: center; justify-content: center; margin-right: 2px; }
.rail .on { height: 45px; position: relative; }
.rail .on::before { content: ""; position: absolute; left: 1px; top: 7px; width: 2px; height: 32px; background: #0f6cbd; }
.rail .last { height: 40px; }
.content { flex: 1; min-width: 0; display: flex; flex-direction: column; }

/* Ribbon */
.menus { height: 36px; flex: none; display: flex; align-items: center; padding-left: 21px; padding-bottom: 4px; }
.menus .burger { color: #444; margin-top: 3px; }
.menus span { height: 31px; line-height: 33px; font-size: 13.4px; }
.m1 { margin-left: 26px; width: 39px; font-weight: 600; position: relative; }
.m1::after { content: ""; position: absolute; left: 0; bottom: 0; width: 39px; height: 3px; border-radius: 2px; background: #0f6cbd; }
.m2 { margin-left: 30px; width: 61px; }
.ribbonrow { height: 40px; flex: none; display: flex; padding-left: 8px; }
.ribbon { width: 1241px; height: 40px; padding-left: 4px; display: flex; align-items: center; background: #fff; border-radius: 4px; box-shadow: 0 1px 3px rgba(0,0,0,.22); color: #616161; }
.newmail { width: 110px; height: 32px; padding-left: 9px; display: flex; align-items: center; gap: 10px; background: #0f6cbd; color: #fff; border-radius: 4px 0 0 4px; white-space: nowrap; }
.newmail span { font-weight: 500; }
.newdrop { width: 28px; height: 32px; margin-left: 1px; display: flex; align-items: center; justify-content: center; background: #0f6cbd; color: #fff; border-radius: 0 4px 4px 0; }
.div { width: 1px; height: 32px; background: #dcdcdc; flex: none; }
.quick { width: 123px; height: 32px; flex: none; display: flex; align-items: center; padding-left: 4px; border: 1px solid #e0e0e0; border-radius: 4px; color: #242424; }
.quick span { margin-left: 2px; width: 79px; white-space: nowrap; padding-top: 1px; font-size: 13.3px; }
.quick b { width: 17px; height: 30px; border-left: 1px solid #e0e0e0; display: flex; align-items: center; justify-content: center; color: #616161; }
.ru { width: 90px; color: #333; white-space: nowrap; }
.g4 { margin-left: 4px; } .g5 { margin-left: 5px; } .g6 { margin-left: 6px; } .g7 { margin-left: 7px; } .g8 { margin-left: 8px; }
.g13 { margin-left: 13px; } .g14 { margin-left: 14px; } .g15 { margin-left: 15px; } .g20 { margin-left: 20px; } .g21 { margin-left: 21px; }
.green { color: #498205; } .pink { color: #e3a9ae; } .off { color: #c0c0c0; } .faint { color: #eee; } .blue { color: #0f7fd8; }
.purple { color: #9b2fae; } .gold { color: #a88512; } .red { color: #b3272d; } .sky { color: #8fc6f5; } .dark { color: #242424; }
.flip { transform: scaleX(-1); }
.collapse { margin: 23px 0 0 3px; color: #555; }

/* Folder tree */
.panes { flex: 1; min-height: 0; margin-top: 8px; display: flex; }
.folders { width: 223px; height: 509px; flex: none; overflow: hidden; padding: 5px 20px 0 15px; color: #333; }
.fhead { height: 36px; margin-bottom: 1px; display: flex; align-items: center; padding-left: 3px; font-size: 14.6px; font-weight: 600; gap: 5px; color: #242424; }
.fhead svg { color: #777; margin-bottom: 2px; }
.second { margin-top: 11px; }
.f { height: 36px; padding: 0 8px 0 17px; display: flex; align-items: center; border-radius: 4px; }
.f span { margin: 1px 0 0 6px; white-space: nowrap; flex: 1; }
.f b { font-weight: 700; color: #115ea3; margin-top: 1px; }
.f i { color: #555; }
.add span { margin-left: 26px; color: #115ea3; font-size: 13.35px; }
.sel { background: #cfe4fa; }
.sel span { font-weight: 600; }

/* Message list */
.list { width: 350px; height: 513px; flex: none; background: #fff; border-radius: 4px 4px 0 0; box-shadow: 0 0 3px rgba(0,0,0,.25); display: flex; flex-direction: column; }
.listhead { height: 45px; flex: none; display: flex; align-items: center; border-bottom: 1px solid #e0e0e0; padding-left: 70px; font-size: 14.6px; font-weight: 600; }
.lt { width: 78px; white-space: nowrap; padding-top: 1px; }
.solidstar { margin-left: 9px; fill: #424242; }
.sel-icon { margin-left: 108px; }
.filt { margin-left: 11px; }
.listbody { flex: 1; min-height: 0; display: flex; overflow: hidden; }
.msgs { width: 332px; overflow: hidden; }
.week { height: 36px; background: #f4f4f4; padding-left: 68px; line-height: 38px; font-weight: 600; }
.msg { height: 81px; padding-top: 8px; border-bottom: 1px solid #e1e1e1; display: flex; padding-left: 9px; color: #242424; }
.msg.cur { height: 82px; padding-top: 9px; background: #cfe4fa; }
.msg.tall { height: 116px; }
.msg > svg { margin-top: 16px; color: #777; }
.box { width: 20px; height: 20px; margin: 11px 0 0 15px; border: 1px solid #444; border-radius: 2px; }
.mtext { width: 220px; margin-left: auto; margin-right: 44px; }
.mtext p { height: 20px; display: flex; justify-content: space-between; align-items: center; white-space: nowrap; }
.mtext p svg { margin-right: 2px; color: #777; }
.tall p svg { margin-right: 3px; }
.mtext time { font-size: 11.5px; padding-top: 1px; }
.mtext .pre { color: #616161; }
.att { width: 132px; height: 28px; margin-top: 6px; padding-left: 8px; border: 1px solid #e0e0e0; display: flex; align-items: center; gap: 4px; font-size: 11.45px; color: #424242; border-radius: 2px; }
.scroll { width: 18px; background: #f4f4f4; display: flex; flex-direction: column; align-items: center; }
.up { border: 2.5px solid transparent; border-bottom: 3px solid #777; border-top: 0; margin-top: 9px; }
.down { border: 2.5px solid transparent; border-top: 3px solid #777; border-bottom: 0; margin: auto 0 8px; }
.thumb { width: 6px; height: 38px; margin-top: 10px; background: #858585; border-radius: 3px; }

/* Reading pane */
.reading { width: 684px; height: 514px; margin-left: 12px; position: relative; display: flex; flex-direction: column; }
.subject { width: 665px; height: 43px; flex: none; padding-left: 12px; font-size: 14.6px; font-weight: 600; line-height: 47px; background: #fff; border-radius: 4px; box-shadow: 0 1px 3px rgba(0,0,0,.25); }
.bodyrow { flex: 1; min-height: 0; margin-top: 8px; display: flex; }
.mailbody { width: 665px; padding: 17px 29px 0 65px; background: #fff; border-right: 1px solid #ddd; overflow: hidden; font-family: "Liberation Sans", Arial, sans-serif; color: #111; }
.mailbody h1 { height: 38px; font-size: 30px; line-height: 36px; color: #03035f; border-bottom: 3px solid #767676; white-space: nowrap; }
.lead { margin-top: 21px; font-size: 16px; line-height: 20px; color: #111; white-space: nowrap; }
.latest { font-size: 14.5px; line-height: 20px; color: #333; }
.mailbody h2 { margin-top: 17px; font-size: 17.5px; line-height: 20px; white-space: nowrap; color: #000; }
.mailbody ul { margin-top: 18px; padding-left: 40px; font-size: 16px; line-height: 18px; }
.mailbody blockquote { height: 100px; margin-top: 15px; padding: 21px 20px; background: #03035f; color: #ff8c00; border-radius: 10px; text-align: right; font-size: 15px; line-height: 20px; white-space: nowrap; }
.alt { display: flex; align-items: center; height: 18px; margin-left: 5px; font-size: 16px; }
.a1 { margin-top: 7px; } .a2 { margin-top: 12px; }
.a3 { margin: 7px 0 0 235px; color: #444; font-size: 15.6px; }
.scroll.rs { width: 19px; }
.rs .up { margin-top: 8px; }
.rs .thumb { height: 203px; margin-top: 106px; }
.tooltip { position: absolute; left: 588px; top: 34px; width: 86px; height: 32px; background: #fff; border-radius: 3px; box-shadow: 0 2px 5px rgba(0,0,0,.25); font-size: 11.45px; line-height: 33px; text-align: center; white-space: nowrap; }
.tooltip::after { content: ""; position: absolute; left: 32px; top: 32px; border: 11px solid transparent; border-top-color: #fff; border-bottom: 0; filter: drop-shadow(0 2px 1px rgba(0,0,0,.12)); }

/* Browser side bar */
.edge { width: 44px; padding-top: 2px; display: flex; flex-direction: column; align-items: center; color: #111; }
.edge span { height: 40px; display: flex; align-items: center; flex: none; }
.eline { width: 28px; height: 1px; background: #b8b8b8; flex: none; margin-top: 12px; }
.eplus { margin-top: 12px; }
.low { margin-top: 178px; }
.edge .epanel { margin-top: 2px; }

/* Taskbar */
.taskbar { height: 48px; flex: none; display: flex; align-items: center; color: #fff; background: linear-gradient(90deg, #1c2623, #1e2a16 20%, #1f2b14); border-top: 1px solid #444d44; }
.weather { width: 289px; height: 46px; margin-bottom: 2px; position: relative; display: flex; align-items: center; padding-left: 18px; }
.weather svg { margin-bottom: 6px; }
.weather em { position: absolute; left: 30px; top: 5px; width: 16px; height: 16px; border-radius: 8px; background: #c42b1c; font-size: 11px; line-height: 16px; text-align: center; }
.weather p { margin-left: 4px; font-size: 11.6px; line-height: 16px; }
.weather small { font-size: 11.6px; color: #ccc; }
.start { width: 37px; }
.tsearch { width: 218px; height: 31px; margin: 0 0 2px 7px; padding: 0 4px 0 9px; background: #f2f2f0; border-radius: 16px; display: flex; align-items: center; color: #333; }
.tsearch .i { stroke-width: 1.9; }
.tsearch span { flex: 1; margin-left: 9px; font-size: 13.2px; color: #666; }
.art { width: 48px; height: 30px; }
.pins { display: flex; margin: 0 0 1px 3px; }
.pins span { width: 43.95px; height: 40px; position: relative; display: flex; align-items: center; justify-content: center; }
.pins em { position: absolute; font-size: 10px; color: #111; background: #4cc2ff; border-radius: 8px; height: 16px; line-height: 15px; text-align: center; }
.pins .count { left: 23px; top: 3px; width: 16px; }
.pins .wide { left: 16px; width: 28px; height: 17px; }
.pins .pre-badge { left: 16px; top: 25px; width: 18px; height: 8px; background: #ffc61a; border-radius: 2px; font-size: 6.5px; line-height: 8px; font-weight: 700; }
.run::after { content: ""; position: absolute; left: 19px; bottom: 0; width: 6px; height: 3px; border-radius: 2px; background: #8f948c; }
.act::before { content: ""; position: absolute; inset: 0 2px; border-radius: 4px; background: rgba(255,255,255,.08); border: 1px solid rgba(255,255,255,.06); }
.act::after { left: 14px; width: 16px; background: #4cc2ff; }
.who { position: absolute; left: 23px; top: 2px; width: 16px; height: 16px; }
.tray { display: flex; align-items: center; margin: 0 0 2px 41px; }
.tcloud { margin-left: 15px; } .twifi { margin-left: 14px; } .tvol { margin-left: 6px; } .tbat { margin-left: 6px; }
.when { width: 70px; font-size: 11.45px; line-height: 16px; text-align: right; }
.tbell { margin-left: 7px; }
```
